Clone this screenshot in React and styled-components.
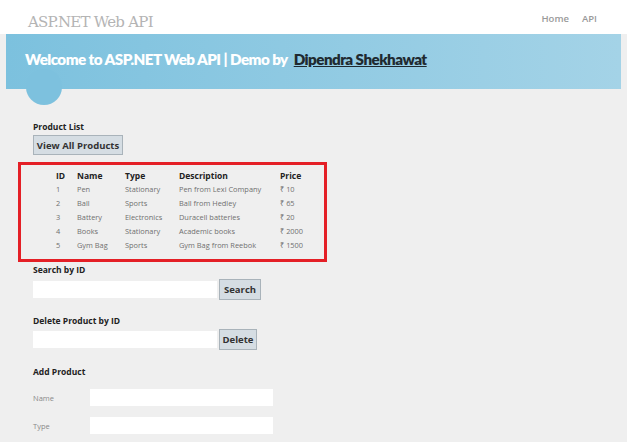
import React from "react";
import styled, { createGlobalStyle } from "styled-components";

const Global = createGlobalStyle`
  html, body { margin: 0; padding: 0; background: #efefef; }
  body { font-family: "Open Sans", "Noto Sans", sans-serif; width: 627px; height: 442px; overflow: hidden; }
`;

const Page = styled.div`
  width: 627px;
  height: 442px;
  display: flex;
  flex-direction: column;
  background: #efefef;
`;

const TopBar = styled.header`
  height: 34px;
  background: #fff;
  display: flex;
  align-items: flex-end;
  justify-content: space-between;
  padding: 0 30px 0 28px;
  box-sizing: border-box;
`;

const SiteTitle = styled.div`
  font-family: "DejaVu Serif", serif;
  font-size: 15px;
  color: #b4b4b4;
  line-height: 18px;
  padding-bottom: 3px;
  letter-spacing: -0.75px;
`;

const Nav = styled.nav`
  display: flex;
  gap: 13px;
  align-self: flex-start;
  margin-top: 12px;
`;

const NavLink = styled.span`
  font-size: 9.5px;
  font-weight: 600;
  color: #9a9a9a;
`;

const Banner = styled.div`
  position: relative;
  margin: 0 6px;
  height: 55px;
  background: linear-gradient(to right, #7cc1de, #a4d3e7);
  display: flex;
  align-items: center;
  padding-left: 19px;
  padding-bottom: 5px;
  box-sizing: border-box;
`;

const Bump = styled.div`
  position: absolute;
  left: 20px;
  top: 35px;
  width: 36px;
  height: 36px;
  border-radius: 50%;
  background: #7dc1de;
`;

const BannerTitle = styled.h1`
  margin: 0;
  font-family: "Lato", "Open Sans", sans-serif;
  font-size: 15.2px;
  font-weight: 800;
  letter-spacing: -0.55px;
  color: #fff;
  position: relative;
  z-index: 1;
`;

const AuthorLink = styled.a`
  color: #1f2a30;
  text-decoration: underline;
  margin-left: 6px;
`;

const Main = styled.main`
  display: flex;
  flex-direction: column;
  align-items: flex-start;
  padding: 32px 0 0 33px;
`;

const SectionLabel = styled.div`
  font-size: 8.5px;
  font-weight: 700;
  color: #222;
  line-height: 12px;
  margin-top: ${(p) => p.$mt || 0}px;
`;

const Button = styled.button`
  font-family: "Open Sans", sans-serif;
  font-size: 9.5px;
  font-weight: 700;
  color: #333;
  background: #d5dde3;
  border: 1px solid #a9b3ba;
  height: ${(p) => p.$h || 21}px;
  width: ${(p) => p.$w}px;
  padding: 0;
  margin-top: ${(p) => p.$mt || 0}px;
  box-sizing: border-box;
`;

const HighlightBox = styled.div`
  margin: 7px 0 0 -15px;
  width: 309px;
  height: 100px;
  border: 3px solid #e41f26;
  box-sizing: border-box;
  padding: 3px 0 0 35px;
`;

const Table = styled.div`
  display: grid;
  grid-template-columns: 21px 48px 54px 101px 1fr;
  grid-auto-rows: 14px;
  align-items: center;
`;

const Th = styled.div`
  font-size: 8.5px;
  font-weight: 700;
  color: #222;
  white-space: nowrap;
`;

const Td = styled.div`
  font-size: 7.4px;
  color: #6f6f6f;
  white-space: nowrap;
`;

const InputRow = styled.div`
  display: flex;
  align-items: center;
  gap: 2px;
  margin-top: ${(p) => p.$mt || 0}px;
`;

const TextBox = styled.div`
  width: ${(p) => p.$w || 184}px;
  height: 17px;
  background: #fff;
`;

const FieldRow = styled.div`
  display: flex;
  align-items: center;
  height: 17px;
  margin-top: 11px;
`;

const FieldLabel = styled.div`
  width: 57px;
  font-size: 7.5px;
  color: #8a8a8a;
`;

const products = [
  [1, "Pen", "Stationary", "Pen from Lexi Company", "₹ 10"],
  [2, "Ball", "Sports", "Ball from Hedley", "₹ 65"],
  [3, "Battery", "Electronics", "Duracell batteries", "₹ 20"],
  [4, "Books", "Stationary", "Academic books", "₹ 2000"],
  [5, "Gym Bag", "Sports", "Gym Bag from Reebok", "₹ 1500"],
];

export default function App() {
  return (
    <Page>
      <Global />
      <TopBar>
        <SiteTitle>ASP.NET Web API</SiteTitle>
        <Nav>
          <NavLink>Home</NavLink>
          <NavLink>API</NavLink>
        </Nav>
      </TopBar>
      <Banner>
        <Bump />
        <BannerTitle>
          Welcome to ASP.NET Web API | Demo by
          <AuthorLink href="#">Dipendra Shekhawat</AuthorLink>
        </BannerTitle>
      </Banner>
      <Main>
        <SectionLabel>Product List</SectionLabel>
        <Button $w={90} $h={20} $mt={2}>View All Products</Button>
        <HighlightBox>
          <Table>
            <Th>ID</Th>
            <Th>Name</Th>
            <Th>Type</Th>
            <Th>Description</Th>
            <Th>Price</Th>
            {products.map((r) =>
              r.map((c, i) => <Td key={r[0] + "-" + i}>{c}</Td>)
            )}
          </Table>
        </HighlightBox>
        <SectionLabel $mt={2}>Search by ID</SectionLabel>
        <InputRow $mt={3}>
          <TextBox />
          <Button $w={42}>Search</Button>
        </InputRow>
        <SectionLabel $mt={15}>Delete Product by ID</SectionLabel>
        <InputRow $mt={2}>
          <TextBox />
          <Button $w={38}>Delete</Button>
        </InputRow>
        <SectionLabel $mt={16}>Add Product</SectionLabel>
        <FieldRow>
          <FieldLabel>Name</FieldLabel>
          <TextBox $w={183} />
        </FieldRow>
        <FieldRow>
          <FieldLabel>Type</FieldLabel>
          <TextBox $w={183} />
        </FieldRow>
      </Main>
    </Page>
  );
}
